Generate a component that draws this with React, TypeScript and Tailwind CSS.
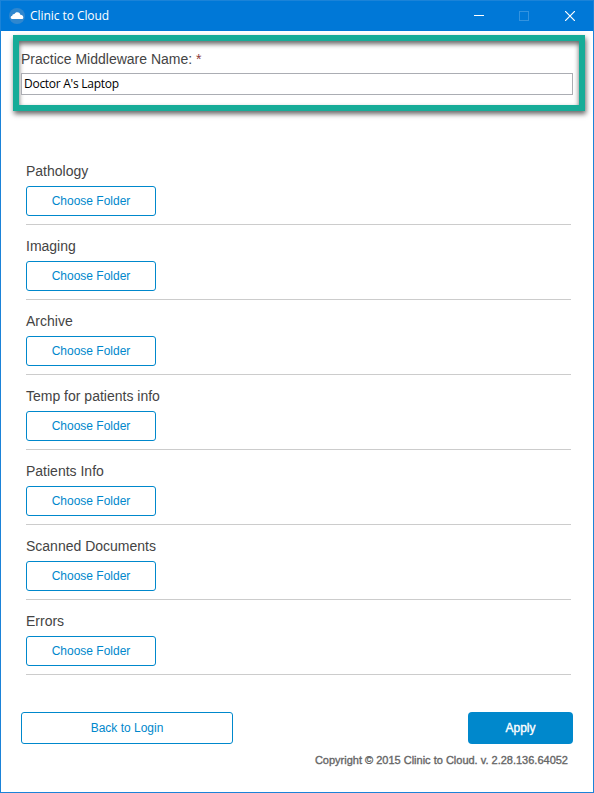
const FOLDERS = [
  'Pathology',
  'Imaging',
  'Archive',
  'Temp for patients info',
  'Patients Info',
  'Scanned Documents',
  'Errors',
];

function CloudLogo() {
  return (
    <svg width="16" height="16" viewBox="0 0 16 16" className="shrink-0" aria-hidden="true">
      <circle cx="8" cy="8" r="8" fill="#2f87cf" />
      <path
        d="M3.2 11C2.1 11 1.6 10.3 1.7 9.3C1.8 8.5 2.4 8 3.2 8C3.3 6.6 4.4 5.9 5.5 6.1C6 4.8 7.2 4.2 8.5 4.3C10.2 4.4 11.1 5.5 11.3 6.8C12.9 6.7 14.3 7.7 14.3 9.4C14.3 10.4 13.7 11 12.7 11Z"
        fill="#fff"
      />
    </svg>
  );
}

function TitleBar() {
  return (
    <header className="flex h-[30px] shrink-0 items-center bg-[#0078d7] pl-2 text-white">
      <CloudLogo />
      <h1 className="ml-[5px] flex-1 font-['Open_Sans',sans-serif] text-[12px] leading-4 tracking-[-0.06px]">
        Clinic to Cloud
      </h1>
      <button aria-label="Minimize" className="flex h-full w-[45px] items-center justify-center">
        <svg width="10" height="10" shapeRendering="crispEdges">
          <path d="M0 4.5H10" stroke="#fff" />
        </svg>
      </button>
      <button aria-label="Maximize" disabled className="flex h-full w-[45px] items-center justify-center">
        <svg width="10" height="10" shapeRendering="crispEdges">
          <rect x="0.5" y="0.5" width="9" height="9" fill="none" stroke="#3393df" />
        </svg>
      </button>
      <button aria-label="Close" className="flex h-full w-[47px] items-center justify-center">
        <svg width="10" height="10">
          <path d="M0 0L10 10M10 0L0 10" stroke="#fff" strokeWidth="1.2" />
        </svg>
      </button>
    </header>
  );
}

function FolderRow({ label }: { label: string }) {
  return (
    <div className="h-[75px] border-b border-[#cccccc] pt-[11px]">
      <div className="text-[14px] leading-[20px] text-[#444444]">{label}</div>
      <button className="mt-[5px] block h-[30px] w-[130px] rounded-[3px] border border-[#0088cc] text-[12px] leading-[28px] text-[#0088cc]">
        Choose Folder
      </button>
    </div>
  );
}

export default function App() {
  return (
    <div className="flex h-[793px] w-[594px] flex-col border border-[#1b83d8] bg-white font-['Liberation_Sans',Arial,sans-serif]">
      <TitleBar />

      <main className="flex flex-col">
        <section className="mt-1 ml-3 h-[76px] w-[572px] border-[6px] border-[#17ac98] pt-2 pl-0.5 shadow-[1px_3px_5px_rgba(0,0,0,0.6),inset_0_3px_5px_rgba(0,0,0,0.6)]">
          <label htmlFor="middleware" className="block text-[14px] leading-[20px] text-[#444444]">
            Practice Middleware Name: <span className="text-[#8c3b3b]">*</span>
          </label>
          <input
            id="middleware"
            type="text"
            defaultValue="Doctor A's Laptop"
            className="mt-1 block h-[22px] w-[552px] border border-[#abadb3] bg-white px-0.5 pb-0.5 font-['Open_Sans',sans-serif] text-[12px] tracking-[-0.27px] text-black outline-none"
          />
        </section>

        <div className="mt-[39px] ml-[25px] w-[545px]">
          {FOLDERS.map((label) => (
            <FolderRow key={label} label={label} />
          ))}
        </div>

        <div className="mt-[37px] ml-5 flex w-[552px] justify-between">
          <button className="h-8 w-[212px] rounded-[3px] border border-[#0088cc] text-[12px] text-[#0088cc]">
            Back to Login
          </button>
          <button className="h-8 w-[105px] rounded-[4px] bg-[#0088cc] text-[12px] text-white [-webkit-text-stroke:0.35px_white]">
            Apply
          </button>
        </div>

        <footer className="mt-2 mr-[25px] text-right text-[11px] leading-4 text-[#666666] [-webkit-text-stroke:0.35px_#666666]">
          Copyright © 2015 Clinic to Cloud. v. 2.28.136.64052
        </footer>
      </main>
    </div>
  );
}
